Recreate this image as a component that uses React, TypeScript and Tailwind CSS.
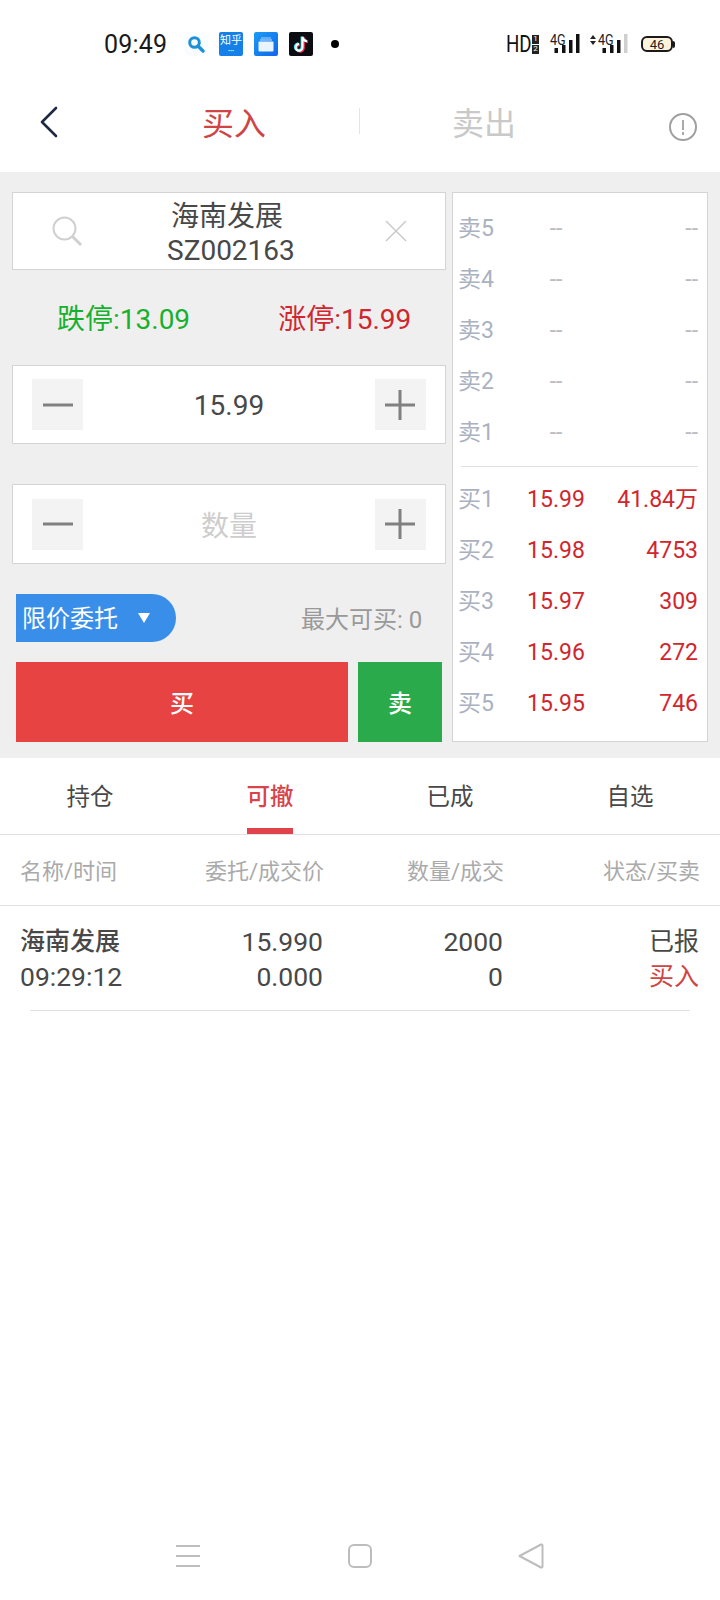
import React from "react";

const FONT = { fontFamily: '"Roboto","Noto Sans CJK SC",sans-serif' };

function Stepper({ children, className }: { children: React.ReactNode; className?: string }) {
  return (
    <div className={"flex items-center justify-between border border-[#d4d4d4] bg-white pl-[19px] pr-[19px] " + (className ?? "")}>
      <div className="flex h-[51px] w-[51px] items-center justify-center bg-[#f3f3f3]">
        <svg width="32" height="32" viewBox="0 0 32 32"><path d="M1 16H31" stroke="#808080" strokeWidth="3" /></svg>
      </div>
      {children}
      <div className="flex h-[51px] w-[51px] items-center justify-center bg-[#f3f3f3]">
        <svg width="32" height="32" viewBox="0 0 32 32"><path d="M1 16H31M16 1V31" stroke="#808080" strokeWidth="3" /></svg>
      </div>
    </div>
  );
}

function BookRow({ label, price, vol, buy }: { label: string; price: string; vol: string; buy?: boolean }) {
  return (
    <div className="grid h-[51px] grid-cols-[58px_80px_1fr] items-center text-[23px]">
      <span className="text-[#aab1c0]">{label}</span>
      <span className={"text-center " + (buy ? "text-[#d0262e]" : "text-[#b9bcc3]")}>{price}</span>
      <span className={"text-right " + (buy ? "text-[#d0262e]" : "text-[#b9bcc3]")}>{vol}</span>
    </div>
  );
}

function Signal({ dim }: { dim?: boolean }) {
  return (
    <div className="relative h-[20px] w-[30px]">
      <span className="absolute left-0 top-0 origin-left text-[14px] leading-[12px] text-[#222] [transform:scaleX(.9)]">4G</span>
      <svg width="30" height="20" viewBox="0 0 30 20">
        <rect x="4.5" y="14" width="3.5" height="5" fill="#111" />
        <rect x="12" y="11" width="3.5" height="8" fill="#111" />
        <rect x="19" y="6" width="3.5" height="13" fill="#111" />
        <rect x="26" y="0" width="3.5" height="19" fill={dim ? "#cfcfcf" : "#111"} />
      </svg>
    </div>
  );
}

export default function App() {
  const tabs = ["持仓", "可撤", "已成", "自选"];
  return (
    <div style={FONT} className="flex h-[1600px] w-[720px] flex-col overflow-hidden bg-white text-[#484848]">
      {/* status bar */}
      <div className="flex h-[80px] items-center pl-[104px] pt-[8px]">
        <span className="w-[80px] text-[25px] leading-none tracking-[0.2px] text-[#1a1a1a]">09:49</span>
        <div className="flex h-[24px] w-[24px] items-center justify-center rounded-[5px] bg-[#fafdff]">
          <svg width="18" height="18" viewBox="0 0 18 18">
            <circle cx="7.5" cy="7.5" r="4.8" fill="none" stroke="#1e90d8" strokeWidth="3" />
            <path d="M11 11L16 16" stroke="#1e90d8" strokeWidth="3.4" strokeLinecap="round" />
          </svg>
        </div>
        <div className="ml-[11px] flex h-[24px] w-[24px] flex-col items-center justify-start rounded-[2px] bg-[#1580e8] pt-[3px] text-[11px] leading-[12px] text-white">
          <span>知乎</span>
          <span className="text-[6px] leading-[7px]">•••</span>
        </div>
        <div className="ml-[11px] flex h-[24px] w-[24px] items-center justify-center rounded-[2px] bg-gradient-to-br from-[#1f9bf5] to-[#1565ea]">
          <svg width="16" height="15" viewBox="0 0 16 15">
            <rect x="3" y="0.5" width="10" height="1" fill="#a8d4ff" />
            <rect x="2" y="2.5" width="12" height="1" fill="#c5e2ff" />
            <rect x="0.5" y="4.5" width="15" height="10" rx="1" fill="#e9f4ff" />
          </svg>
        </div>
        <div className="ml-[11px] flex h-[24px] w-[24px] items-center justify-center rounded-[2px] bg-[#0b0b12]">
          <svg width="18" height="20" viewBox="0 0 18 20">
            <path d="M10.5 3V13.5A3.4 3.4 0 1 1 7 10M10.5 3C11 5.5 12.6 7 15 7.3" fill="none" stroke="#ff2d55" strokeWidth="2.6" transform="translate(1 .6)" />
            <path d="M10.5 3V13.5A3.4 3.4 0 1 1 7 10M10.5 3C11 5.5 12.6 7 15 7.3" fill="none" stroke="#39e6e6" strokeWidth="2.6" transform="translate(-.6 -.4)" />
            <path d="M10.5 3V13.5A3.4 3.4 0 1 1 7 10M10.5 3C11 5.5 12.6 7 15 7.3" fill="none" stroke="#fff" strokeWidth="2" />
          </svg>
        </div>
        <div className="ml-[18px] h-[8px] w-[8px] rounded-full bg-black" />
        <div className="ml-[167px] flex items-center">
          <span className="w-[26px] origin-left text-[24px] leading-none text-[#111] [transform:scaleX(.78)]">HD</span>
          <div className="flex flex-col gap-[1px]">
            <span className="flex h-[9px] w-[7px] items-center justify-center bg-[#222] text-[8px] leading-none text-white">1</span>
            <span className="flex h-[9px] w-[7px] items-center justify-center bg-[#222] text-[8px] leading-none text-white">2</span>
          </div>
        </div>
        <div className="ml-[11px]"><Signal /></div>
        <svg width="6" height="10" viewBox="0 0 6 10" className="mb-[8px] ml-[10px]">
          <path d="M3 0L6 4H0ZM3 10L0 6H6Z" fill="#222" />
        </svg>
        <div className="ml-[2px]"><Signal dim /></div>
        <div className="ml-[13px] flex items-center">
          <div className="flex h-[16px] w-[32px] items-center justify-center rounded-[6px] border-2 border-[#1a1a1a] bg-[#fdf3dc] text-[13px] leading-none text-[#222]">46</div>
          <div className="h-[7px] w-[2px] rounded-r-[2px] bg-[#1a1a1a]" />
        </div>
      </div>

      {/* header */}
      <div className="flex h-[92px] items-center pl-[40px]">
        <svg width="18" height="32" viewBox="0 0 18 32" className="mt-[-8px]">
          <path d="M16 2L2 16L16 30" fill="none" stroke="#1c2a44" strokeWidth="2.6" strokeLinecap="round" strokeLinejoin="round" />
        </svg>
        <span className="mb-[4px] ml-[144px] w-[64px] text-center text-[32px] leading-none text-[#cf4444]">买入</span>
        <div className="mb-[10px] ml-[93px] h-[26px] w-px bg-[#e4e4e4]" />
        <span className="mb-[4px] ml-[92px] w-[64px] text-center text-[32px] leading-none text-[#c9c9c9]">卖出</span>
        <svg width="28" height="28" viewBox="0 0 28 28" className="ml-[153px] mt-[1px]">
          <circle cx="14" cy="14" r="13" fill="none" stroke="#a0a0a0" strokeWidth="2" />
          <path d="M14 7V17M14 19V22" stroke="#a0a0a0" strokeWidth="1.8" />
        </svg>
      </div>

      {/* trade panel */}
      <div className="flex h-[586px] bg-[#efefef] pl-[12px] pt-[20px]">
        <div className="w-[434px]">
          <div className="flex h-[78px] items-center border border-[#d4d4d4] bg-white pl-[38px]">
            <svg width="32" height="32" viewBox="0 0 32 32">
              <circle cx="13.5" cy="13.5" r="11" fill="none" stroke="#d0d0d0" strokeWidth="2" />
              <path d="M21.5 21.5L30 30" stroke="#d0d0d0" strokeWidth="3" />
            </svg>
            <div className="ml-[84px] mt-[6px] w-[120px] text-center text-[28px] leading-[34px]">
              <div>海南发展</div>
              <div>SZ002163</div>
            </div>
            <svg width="24" height="24" viewBox="0 0 24 24" className="ml-[97px]">
              <path d="M2 2L22 22M22 2L2 22" stroke="#c8c8c8" strokeWidth="1.4" />
            </svg>
          </div>
          <div className="flex h-[95px] items-center pl-[45px] pt-[4px] text-[28px] leading-none">
            <span className="text-[#18b02f]">跌停:13.09</span>
            <span className="ml-[88px] text-[#d0262e]">涨停:15.99</span>
          </div>
          <Stepper className="h-[79px]">
            <span className="mt-[2px] text-[28px] leading-none">15.99</span>
          </Stepper>
          <Stepper className="mt-[40px] h-[80px]">
            <span className="mt-[6px] text-[28px] leading-none text-[#cdcdcd]">数量</span>
          </Stepper>
          <div className="mt-[30px] flex h-[48px] items-center pl-[4px]">
            <div className="flex h-[48px] w-[160px] items-center rounded-r-[24px] bg-[#388ee8] pl-[6px] text-[24px] leading-none text-white">
              <span className="mt-[2px]">限价委托</span>
              <svg width="12" height="11" viewBox="0 0 12 11" className="ml-[20px]"><path d="M0 0H12L6 10Z" fill="#fff" /></svg>
            </div>
            <span className="ml-[125px] mt-[4px] text-[24px] leading-none text-[#999]">最大可买: 0</span>
          </div>
          <div className="mt-[20px] flex h-[80px] pl-[4px] text-[24px] font-medium text-white">
            <div className="flex w-[332px] items-center justify-center bg-[#e84343] pt-[3px]">买</div>
            <div className="ml-[10px] flex w-[84px] items-center justify-center bg-[#2aaa4a] pt-[3px]">卖</div>
          </div>
        </div>

        <div className="ml-[6px] h-[550px] w-[256px] border border-[#d4d4d4] bg-white pl-[5px] pr-[9px] pt-[11px]">
          <BookRow label="卖5" price="--" vol="--" />
          <BookRow label="卖4" price="--" vol="--" />
          <BookRow label="卖3" price="--" vol="--" />
          <BookRow label="卖2" price="--" vol="--" />
          <BookRow label="卖1" price="--" vol="--" />
          <div className="mb-[8px] ml-[3px] mt-[7px] h-px bg-[#e2e2e2]" />
          <BookRow label="买1" price="15.99" vol="41.84万" buy />
          <BookRow label="买2" price="15.98" vol="4753" buy />
          <BookRow label="买3" price="15.97" vol="309" buy />
          <BookRow label="买4" price="15.96" vol="272" buy />
          <BookRow label="买5" price="15.95" vol="746" buy />
        </div>
      </div>

      {/* tabs */}
      <div className="grid h-[77px] grid-cols-4 border-b border-[#e2e2e2]">
        {tabs.map((t, i) => (
          <div key={t} className="flex flex-col items-center">
            <span className={"mt-[26px] text-[23.5px] leading-[26px] " + (i === 1 ? "font-medium text-[#d9434a]" : "text-[#484848]")}>{t}</span>
            {i === 1 && <div className="mt-auto h-[6px] w-[46px] bg-[#e04349]" />}
          </div>
        ))}
      </div>

      {/* table header */}
      <div className="grid h-[71px] grid-cols-[141px_163px_180px_1fr] items-center border-b border-[#e2e2e2] pl-[20px] pr-[20px] pt-[2px] text-[22px] text-[#aaa]">
        <span>名称/时间</span>
        <span className="text-right">委托/成交价</span>
        <span className="text-right">数量/成交</span>
        <span className="text-right">状态/买卖</span>
      </div>

      {/* table row */}
      <div className="grid grid-cols-[140px_163px_180px_1fr] pl-[20px] pr-[21px] pt-[18px] text-[26.5px] leading-[35px]">
        <span className="text-[25px] font-medium">海南发展</span>
        <span className="text-right">15.990</span>
        <span className="text-right">2000</span>
        <span className="text-right text-[25px]">已报</span>
        <span>09:29:12</span>
        <span className="text-right">0.000</span>
        <span className="text-right">0</span>
        <span className="text-right text-[25px] text-[#cf4444]">买入</span>
      </div>
      <div className="mx-[30px] mt-[16px] h-px bg-[#e2e2e2]" />

      {/* nav bar */}
      <div className="mt-auto flex items-center pb-[31px] pl-[176px]">
        <svg width="24" height="24" viewBox="0 0 24 24"><path d="M0 2H24M0 12H24M0 22H24" stroke="#bdbdbd" strokeWidth="2" /></svg>
        <svg width="24" height="24" viewBox="0 0 24 24" className="ml-[148px]"><rect x="1" y="1" width="22" height="22" rx="5" fill="none" stroke="#bdbdbd" strokeWidth="2" /></svg>
        <svg width="26" height="26" viewBox="0 0 26 26" className="ml-[146px]"><path d="M1.5 13L23 1.5C24 1.2 24.5 1.6 24.5 2.5V23.5C24.5 24.4 24 24.8 23 24.5Z" fill="none" stroke="#bdbdbd" strokeWidth="2" strokeLinejoin="round" /></svg>
      </div>
    </div>
  );
}
